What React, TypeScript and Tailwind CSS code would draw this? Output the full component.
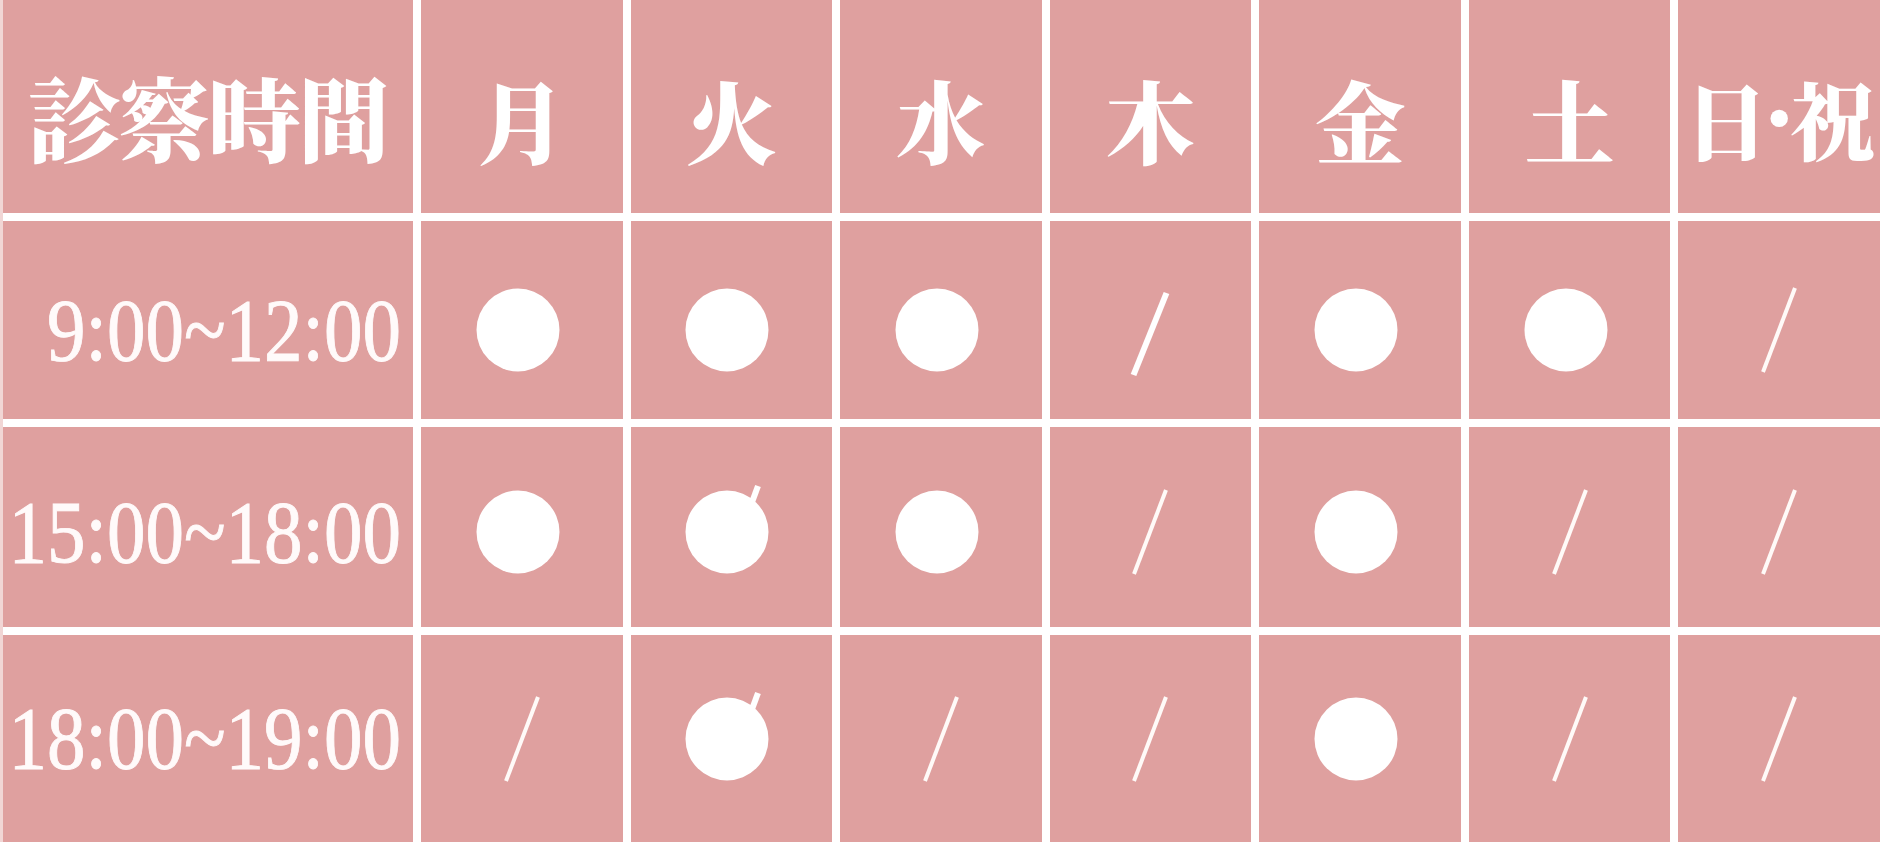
import React from "react";

type Kind = "o" | "s" | "S" | "ot";

const rows: { time: string; pad: string; marks: Kind[] }[] = [
  { time: "9:00~12:00", pad: "pt-[20px]", marks: ["o", "o", "o", "S", "o", "o", "s"] },
  { time: "15:00~18:00", pad: "pt-[10px]", marks: ["o", "ot", "o", "s", "o", "s", "s"] },
  { time: "18:00~19:00", pad: "pt-[0px]", marks: ["s", "ot", "s", "s", "o", "s", "s"] },
];

const days = ["月", "火", "水", "木", "金", "土"];

const cjk =
  "font-['Noto_Serif_CJK_JP','IPAMincho','Noto_Sans_CJK_JP',serif] font-black";

function Mark({ kind }: { kind: Kind }) {
  return (
    <svg width="120" height="120" viewBox="-60 -60 120 120" className="block">
      {kind === "s" && (
        <line x1="16" y1="-42" x2="-16" y2="42" stroke="#fffaf8" strokeWidth="4" strokeLinecap="butt" />
      )}
      {kind === "S" && (
        <line x1="16.5" y1="-37" x2="-16.5" y2="45" stroke="#ffffff" strokeWidth="6" strokeLinecap="butt" />
      )}
      {kind === "ot" && (
        <line x1="27" y1="-46" x2="-4" y2="38" stroke="#ffffff" strokeWidth="6" strokeLinecap="butt" />
      )}
      {(kind === "o" || kind === "ot") && <circle cx="-4" cy="0" r="41.5" fill="#ffffff" />}
    </svg>
  );
}

export default function App() {
  return (
    <div className="w-[1883px] h-[842px] bg-white overflow-hidden">
      <div className="w-full h-full border-l-[3px] border-[#f1d6d5] pr-[3px] grid grid-cols-[410px_repeat(7,1fr)] grid-rows-[213px_198px_200px_1fr] gap-[8px]">
        <div className={`bg-[#dfa09f] flex items-center justify-center pt-[17px] text-white text-[92px] leading-none tracking-[-2px] ${cjk}`}>
          診察時間
        </div>
        {days.map((d) => (
          <div
            key={d}
            className={`bg-[#dfa09f] flex items-center justify-center pt-[22px] text-white text-[90px] leading-none ${cjk}`}
          >
            {d}
          </div>
        ))}
        <div
          className={`bg-[#dfa09f] flex items-center justify-center pt-[22px] text-white text-[84px] leading-none ${cjk}`}
        >
          <span>日</span>
          <span className="font-['Liberation_Serif',serif] text-[64px]">•</span>
          <span>祝</span>
        </div>
        {rows.map((r) => (
          <React.Fragment key={r.time}>
            <div
              className={`bg-[#dfa09f] flex items-center justify-end pr-[12px] ${r.pad} text-[#fffafa] text-[77px] leading-none font-['Liberation_Serif',serif] [-webkit-text-stroke:0.8px_#fffafa]`}
            >
              <span className="inline-block scale-y-[1.15]">{r.time}</span>
            </div>
            {r.marks.map((m, i) => (
              <div key={i} className={`bg-[#dfa09f] flex items-center justify-center ${r.pad}`}>
                <Mark kind={m} />
              </div>
            ))}
          </React.Fragment>
        ))}
      </div>
    </div>
  );
}
